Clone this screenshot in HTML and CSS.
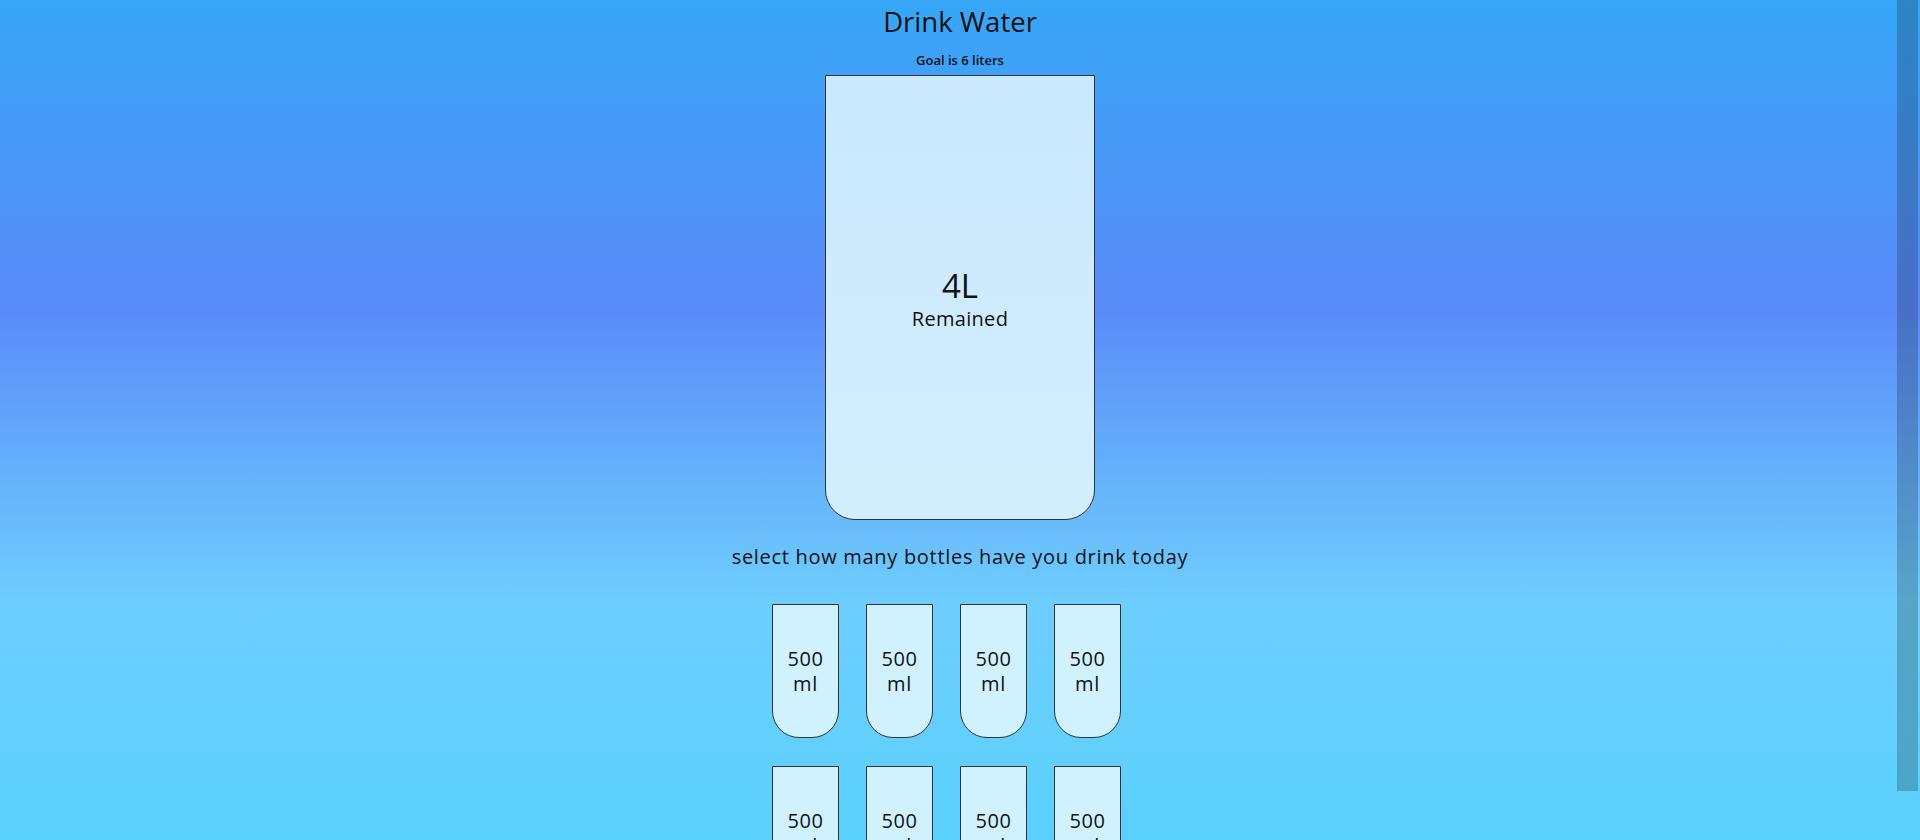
FILE: index.html
```html
<!DOCTYPE html>
<html lang="en">
<head>
<meta charset="UTF-8">
<title>Drink Water</title>
<link rel="stylesheet" href="styles.css">
</head>
<body>
  <h1 class="title">Drink Water</h1>
  <h3 class="goal">Goal is 6 liters</h3>
  <div class="cup">
    <div class="remained">
      <span class="liters">4L</span>
      <small class="remained-label">Remained</small>
    </div>
  </div>
  <p class="text">select how many bottles have you drink today</p>
  <div class="cups">
    <div class="cup-small">500 ml</div>
    <div class="cup-small">500 ml</div>
    <div class="cup-small">500 ml</div>
    <div class="cup-small">500 ml</div>
    <div class="cup-small">500 ml</div>
    <div class="cup-small">500 ml</div>
    <div class="cup-small">500 ml</div>
    <div class="cup-small">500 ml</div>
  </div>
  <div class="scroll-thumb" aria-hidden="true"></div>
</body>
</html>
```
FILE: styles.css
```css
html {
  overflow-x: hidden;
}

body {
  margin: 0;
  width: 100vw;
  min-height: 100vh;
  display: flex;
  flex-direction: column;
  align-items: center;
  font-family: "Open Sans", "Noto Sans", sans-serif;
  color: #111;
  background: linear-gradient(to bottom, #37a7f7 0%, #5a8bf9 33%, #6ecefd 65%, #52d1fc 100%);
}

.scroll-thumb {
  position: fixed;
  top: 0;
  right: 2px;
  width: 21px;
  height: 791px;
  background-color: rgba(0, 0, 0, 0.2);
}

.title {
  margin: 4px 0 0;
  font-size: 27.5px;
  line-height: 35px;
  font-weight: 400;
}

.goal {
  margin: 13px 0 0;
  font-size: 13px;
  line-height: 16px;
  font-weight: 600;
}

.cup {
  margin-top: 7px;
  box-sizing: border-box;
  width: 270px;
  height: 445px;
  border: 1px solid #333;
  border-radius: 0 0 30px 30px;
  background: linear-gradient(to bottom, #cae8fd, #d3effe);
  display: flex;
  flex-direction: column;
  align-items: center;
  justify-content: center;
}

.remained {
  display: flex;
  flex-direction: column;
  align-items: center;
  margin-top: 2px;
}

.liters {
  font-size: 33px;
  line-height: 40px;
}

.remained-label {
  font-size: 20px;
  line-height: 26px;
  letter-spacing: 0.3px;
}

.text {
  margin: 24px 0 0;
  font-size: 20px;
  line-height: 25px;
  letter-spacing: 0.7px;
}

.cups {
  margin-top: 35px;
  width: 376px;
  display: flex;
  flex-wrap: wrap;
}

.cup-small {
  box-sizing: border-box;
  width: 67px;
  height: 134px;
  margin: 0 27px 28px 0;
  border: 1px solid #333;
  border-radius: 0 0 27px 27px;
  background: #d0f1fe;
  display: flex;
  align-items: center;
  justify-content: center;
  text-align: center;
  font-size: 20px;
  line-height: 25px;
  letter-spacing: 0.6px;
  padding: 0 6px;
}
```
